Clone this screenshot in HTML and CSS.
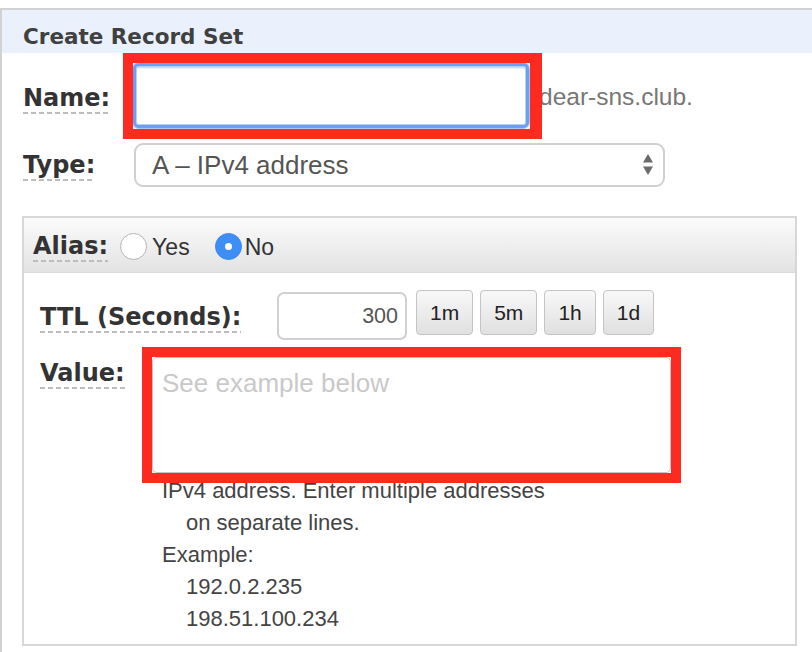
FILE: index.html
```html
<!DOCTYPE html>
<html lang="en">
<head>
<meta charset="utf-8">
<title>Create Record Set</title>
<link rel="stylesheet" href="styles.css">
</head>
<body>
<div class="panel">
  <div class="panel-head">Create Record Set</div>
  <div class="panel-body">
    <div class="row row-name">
      <div class="lbl-col"><span class="lbl lbl-name">Name:</span></div>
      <div class="field">
        <input class="name-input" type="text" aria-label="Name">
        <div class="mark mark-name"></div>
      </div>
      <span class="suffix">dear-sns.club.</span>
    </div>
    <div class="row row-type">
      <div class="lbl-col"><span class="lbl lbl-type">Type:</span></div>
      <div class="select">
        <span>A – IPv4 address</span>
        <svg class="arrows" width="10" height="24" viewBox="0 0 10 24"><polygon points="5,1 10,9.5 0,9.5" fill="#6b6b6b"/><polygon points="0,13.5 10,13.5 5,22" fill="#6b6b6b"/></svg>
      </div>
    </div>
    <div class="alias-box">
      <div class="alias-head">
        <span class="lbl">Alias:</span>
        <span class="opt opt-yes"><span class="radio"></span>Yes</span>
        <span class="opt opt-no"><span class="radio radio-on"></span>No</span>
      </div>
      <div class="alias-body">
        <div class="row row-ttl">
          <div class="lbl-col ttl-col"><span class="lbl lbl-ttl">TTL (Seconds):</span></div>
          <div class="ttl-input">300</div>
          <div class="btns">
            <button class="btn">1m</button>
            <button class="btn">5m</button>
            <button class="btn">1h</button>
            <button class="btn">1d</button>
          </div>
        </div>
        <div class="row row-value">
          <div class="lbl-col value-col"><span class="lbl lbl-value">Value:</span></div>
          <div class="field">
            <textarea class="value-input" placeholder="See example below"></textarea>
            <div class="mark mark-value"></div>
          </div>
        </div>
        <div class="help">
          <div>IPv4 address. Enter multiple addresses</div>
          <div class="indent">on separate lines.</div>
          <div>Example:</div>
          <div class="indent">192.0.2.235</div>
          <div class="indent">198.51.100.234</div>
        </div>
      </div>
    </div>
  </div>
</div>
</body>
</html>
```
FILE: styles.css
```css
html, body {
  margin: 0;
  padding: 0;
  background: #fff;
  overflow: hidden;
}
body {
  width: 812px;
  height: 652px;
}
.panel {
  margin-top: 8px;
  width: 900px;
  height: 700px;
  box-sizing: border-box;
  border-top: 2px solid #d2d2d2;
  border-left: 2px solid #d2d2d2;
}
.panel-head {
  height: 43px;
  box-sizing: border-box;
  padding: 10px 0 0 21px;
  background: #eaf1fd;
  font: bold 21.5px/33px "DejaVu Sans", Verdana, sans-serif;
  color: #404040;
}
.panel-body {
  padding: 10px 0 0 21px;
}
.row {
  display: flex;
  align-items: flex-start;
}
.lbl-col {
  width: 110px;
  flex: none;
}
.lbl {
  display: inline-block;
  font: bold 24px/28px "DejaVu Sans", Verdana, sans-serif;
  color: #333;
  padding-bottom: 2px;
  background: repeating-linear-gradient(to right, #bdbdbd 0 5px, transparent 5px 8px) left bottom / 100% 2px no-repeat;
}
.lbl-name { margin-top: 21px; }
.lbl-type { margin-top: 8px; }
.field {
  position: relative;
}
.name-input {
  display: block;
  width: 396px;
  height: 65px;
  margin: 0;
  padding: 0 8px;
  box-sizing: border-box;
  border: 3px solid #6d9ff0;
  border-radius: 6px;
  background: #fff;
  box-shadow: inset 0 3px 2px -1px #b7cff6, inset 0 0 0 1px #b8d0f7, 0 0 0 1px #a7c5f5;
  outline: none;
}
.mark {
  position: absolute;
  border: 10px solid #fd2a1f;
  pointer-events: none;
  z-index: 2;
}
.mark-name {
  top: -10px;
  left: -10px;
  right: -13px;
  bottom: -11px;
  border-right-width: 12px;
}
.suffix {
  position: relative;
  z-index: 1;
  margin: 20px 0 0 10px;
  font: 24.5px/28px "Liberation Sans", Arial, sans-serif;
  color: #777;
  white-space: nowrap;
}
.row-type {
  margin-top: 15px;
}
.select {
  width: 531px;
  height: 44px;
  margin-left: 1px;
  box-sizing: border-box;
  border: 2px solid #d0d0d0;
  border-radius: 9px;
  display: flex;
  align-items: center;
  justify-content: space-between;
  padding: 0 10px 0 16px;
  font: 26px/30px "Liberation Sans", Arial, sans-serif;
  color: #555;
}
.arrows {
  display: block;
}
.alias-box {
  margin: 29px 0 0 -1px;
  width: 775px;
  box-sizing: border-box;
  border: 2px solid #d7d7d7;
}
.alias-head {
  height: 55px;
  box-sizing: border-box;
  display: flex;
  align-items: center;
  padding: 3px 0 0 9px;
  background: linear-gradient(#fbfbfb, #e3e3e3);
  border-bottom: 1px solid #d9d9d9;
}
.opt {
  display: flex;
  align-items: center;
  gap: 5px;
  font: 23px/26px "Liberation Sans", Arial, sans-serif;
  color: #333;
}
.opt-yes { margin-left: 12px; }
.opt-no { margin-left: 25px; }
.radio {
  width: 27px;
  height: 27px;
  box-sizing: border-box;
  border-radius: 50%;
  border: 1px solid #b4b4b4;
  background: #fff;
  position: relative;
}
.radio-on {
  background: #3d8ef5;
  border-color: #3a88f0;
}
.radio-on::after {
  content: "";
  position: absolute;
  left: 50%;
  top: 50%;
  width: 7px;
  height: 7px;
  margin: -3.5px 0 0 -3.5px;
  border-radius: 50%;
  background: #fff;
}
.opt-no .radio {
  margin-right: -2px;
}
.alias-body {
  padding: 17px 0 11px 16px;
}
.ttl-col {
  width: 237px;
}
.lbl-ttl { margin-top: 13px; }
.ttl-input {
  width: 130px;
  height: 48px;
  margin-top: 2px;
  box-sizing: border-box;
  border: 2px solid #d0d0d0;
  border-radius: 7px;
  text-align: right;
  padding-right: 7px;
  font: 21.5px/44px "Liberation Sans", Arial, sans-serif;
  color: #555;
}
.btns {
  display: flex;
  gap: 7px;
  margin-left: 9px;
}
.btn {
  height: 45px;
  margin: 0;
  padding: 0 13px;
  box-sizing: border-box;
  border: 1px solid #c4c4c4;
  border-radius: 4px;
  background: linear-gradient(#f8f8f8, #e0e0e0);
  font: 21px/24px "Liberation Sans", Arial, sans-serif;
  color: #222;
}
.row-value {
  margin-top: 17px;
}
.value-col {
  width: 112px;
}
.lbl-value { margin-top: 2px; }
.value-input {
  display: block;
  width: 519px;
  height: 116px;
  margin: 0;
  box-sizing: border-box;
  border: 1px solid #c4c4c4;
  border-radius: 5px;
  padding: 10px 9px;
  font: 26px/30px "Liberation Sans", Arial, sans-serif;
  color: #555;
  resize: none;
  outline: none;
}
.value-input::placeholder {
  color: #c9c9c9;
}
.mark-value {
  top: -10px;
  left: -10px;
  right: -10px;
  bottom: -10px;
}
.help {
  margin-left: 122px;
  padding-top: 2px;
  font: 22px/32px "Liberation Sans", Arial, sans-serif;
  color: #444;
}
.indent {
  padding-left: 24px;
}
.alias-body .help {
  margin-bottom: -2px;
}
```
